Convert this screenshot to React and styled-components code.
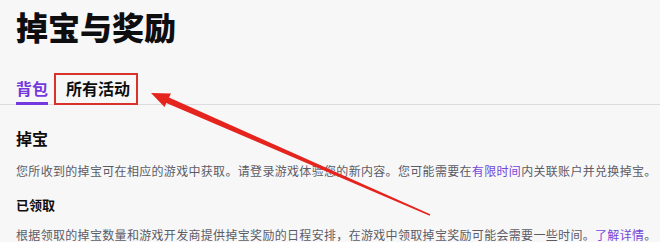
import React from 'react';
import styled, { createGlobalStyle } from 'styled-components';

const GlobalStyle = createGlobalStyle`
  html, body {
    margin: 0;
    padding: 0;
    background: #f7f7f8;
  }
  body {
    font-family: 'Noto Sans CJK SC', 'Noto Sans', sans-serif;
    color: #0e0e10;
  }
`;

const Page = styled.div`
  position: relative;
  width: 660px;
  height: 242px;
  overflow: hidden;
  box-sizing: border-box;
  padding: 6px 0 0 16px;
  background: #f7f7f8;
`;

const Title = styled.h1`
  margin: 0;
  font-size: 32px;
  line-height: 40px;
  font-weight: 900;
`;

const TabBar = styled.div`
  display: flex;
  align-items: flex-end;
  gap: 6px;
  margin-top: 27px;
  margin-left: -16px;
  padding-left: 16px;
  border-bottom: 1px solid #dcdce0;
`;

const Tab = styled.div`
  box-sizing: border-box;
  height: 32px;
  line-height: 30px;
  font-size: 16px;
  font-weight: 700;
  color: ${(p) => (p.$active ? '#7438de' : '#0e0e10')};
  border-bottom: 3px solid ${(p) => (p.$active ? '#7438de' : 'transparent')};
  margin-bottom: -1px;
  padding: ${(p) => (p.$marked ? '0 8px 0 12px' : '0')};
  outline: ${(p) => (p.$marked ? '2px solid #d8322b' : 'none')};
  outline-offset: -2px;
`;

const Section = styled.div`
  margin-top: ${(p) => p.$top}px;
`;

const Heading = styled.h2`
  margin: 0;
  font-size: ${(p) => p.$size}px;
  line-height: ${(p) => p.$lh}px;
  font-weight: 700;
`;

const Text = styled.p`
  margin: ${(p) => p.$top}px 0 0;
  font-size: 12px;
  letter-spacing: 0.32px;
  line-height: 20px;
  color: #5c5c66;
  white-space: nowrap;
`;

const Link = styled.span`
  color: #7446d8;
`;

const Arrow = styled.svg`
  position: absolute;
  left: 0;
  top: 0;
  width: 660px;
  height: 242px;
  pointer-events: none;
`;

const App = () => (
  <>
    <GlobalStyle />
    <Page>
      <Title>掉宝与奖励</Title>
      <TabBar>
        <Tab $active>背包</Tab>
        <Tab $marked>所有活动</Tab>
      </TabBar>
      <Section $top={21}>
        <Heading $size={16} $lh={24}>掉宝</Heading>
        <Text $top={11}>
          您所收到的掉宝可在相应的游戏中获取。请登录游戏体验您的新内容。您可能需要在<Link>有限时间</Link>内关联账户并兑换掉宝。
        </Text>
      </Section>
      <Section $top={14}>
        <Heading $size={13} $lh={20}>已领取</Heading>
        <Text $top={10}>
          根据领取的掉宝数量和游戏开发商提供掉宝奖励的日程安排，在游戏中领取掉宝奖励可能会需要一些时间。<Link>了解详情</Link>。
        </Text>
      </Section>
      <Arrow viewBox="0 0 660 242">
        <polygon
          fill="#e5241d"
          points="151,93 171,93.5 169,97.6 430.3,214.3 429.7,215.7 166.3,103 164.5,107"
        />
      </Arrow>
    </Page>
  </>
);

export default App;
